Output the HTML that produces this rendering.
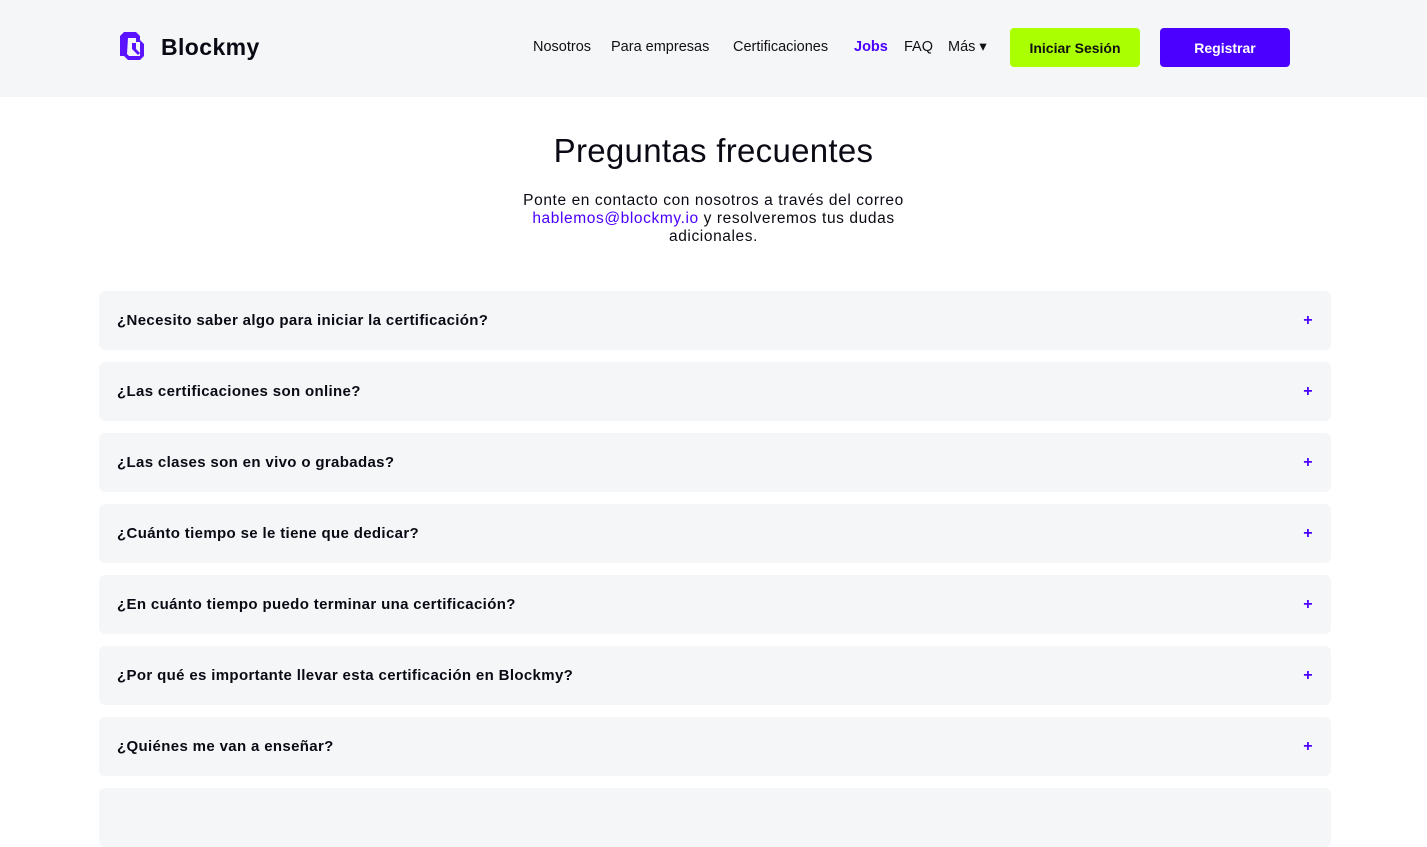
<!DOCTYPE html>
<html><head><meta charset="utf-8"><style>
*{margin:0;padding:0;box-sizing:border-box}
body{width:1427px;height:804px;overflow:hidden;background:#fff;font-family:"Liberation Sans",sans-serif;color:#0a0a14}
header{height:97px;background:#f5f6f8;position:relative}
.logo{position:absolute;left:120px;top:32px;display:flex;align-items:center}
.logo span{font-weight:bold;font-size:23px;margin-left:13px;letter-spacing:0.4px}
nav{position:absolute;top:39px;left:533px;font-size:14.5px}
nav a{position:absolute;white-space:nowrap;color:#111}
.btn{position:absolute;top:28px;height:39px;border-radius:4px;font-weight:bold;font-size:14px;display:flex;align-items:center;justify-content:center}
h1{position:absolute;top:132px;width:100%;text-align:center;font-weight:normal;font-size:33px;letter-spacing:0.3px}
.sub{position:absolute;top:192px;left:0;width:100%;text-align:center;font-size:15.5px;line-height:18px;letter-spacing:0.6px}
.q{position:absolute;left:99px;width:1232px;height:59px;background:#f5f6f8;border-radius:6px;font-weight:bold;font-size:15px;letter-spacing:0.35px;padding-left:18px;display:flex;align-items:center}
.q b{position:absolute;right:18px;color:#4b00ff;font-size:16px}
</style></head><body>
<header>
<div class="logo"><svg width="28" height="31" viewBox="0 0 28 31"><path d="M4 0h12l4 4v4l4 4v12l-4 4H8l-4-4H0V4z" fill="#5a14ff"/><path d="M8 6h8v4h4v14H9l-2-2z" fill="#f5f6f8"/><path d="M12 11h4v6l4 4-2 2-6-6z" fill="#5a14ff"/></svg><span>Blockmy</span></div>
<nav>
<a style="left:0">Nosotros</a><a style="left:78px">Para empresas</a><a style="left:200px">Certificaciones</a><a style="left:321px;color:#4b00ff;font-weight:bold">Jobs</a><a style="left:371px">FAQ</a><a style="left:415px">Más ▾</a>
</nav>
<div class="btn" style="left:1010px;width:130px;background:#aaff00;color:#111">Iniciar Sesión</div>
<div class="btn" style="left:1160px;width:130px;background:#4b00ff;color:#fff">Registrar</div>
</header>
<h1>Preguntas frecuentes</h1>
<div class="sub">Ponte en contacto con nosotros a través del correo<br><span style="color:#4b00ff">hablemos@blockmy.io</span> y resolveremos tus dudas<br>adicionales.</div>
<div class="q" style="top:291px">¿Necesito saber algo para iniciar la certificación?<b>+</b></div>
<div class="q" style="top:362px">¿Las certificaciones son online?<b>+</b></div>
<div class="q" style="top:433px">¿Las clases son en vivo o grabadas?<b>+</b></div>
<div class="q" style="top:504px">¿Cuánto tiempo se le tiene que dedicar?<b>+</b></div>
<div class="q" style="top:575px">¿En cuánto tiempo puedo terminar una certificación?<b>+</b></div>
<div class="q" style="top:646px">¿Por qué es importante llevar esta certificación en Blockmy?<b>+</b></div>
<div class="q" style="top:717px">¿Quiénes me van a enseñar?<b>+</b></div>
<div class="q" style="top:788px"></div>
</body></html>
